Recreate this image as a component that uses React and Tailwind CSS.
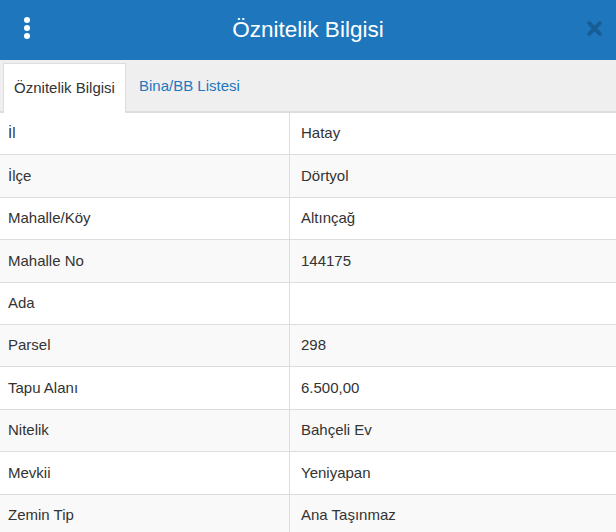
import React from 'react';

const rows = [
  ['İl', 'Hatay'],
  ['İlçe', 'Dörtyol'],
  ['Mahalle/Köy', 'Altınçağ'],
  ['Mahalle No', '144175'],
  ['Ada', ''],
  ['Parsel', '298'],
  ['Tapu Alanı', '6.500,00'],
  ['Nitelik', 'Bahçeli Ev'],
  ['Mevkii', 'Yeniyapan'],
  ['Zemin Tip', 'Ana Taşınmaz'],
];

const App = () => {
  return (
    <div className="w-[616px] h-[532px] overflow-hidden bg-white text-[#333] font-['Liberation_Sans',Arial,sans-serif]">
      {/* header */}
      <header className="relative h-[60px] bg-[#1e77bd] flex items-center justify-center">
        <div className="absolute left-[24px] top-[17px] flex flex-col gap-[2px]">
          <span className="w-[6px] h-[6px] rounded-full bg-white"></span>
          <span className="w-[6px] h-[6px] rounded-full bg-white"></span>
          <span className="w-[6px] h-[6px] rounded-full bg-white"></span>
        </div>
        <h1 className="text-white text-[22.5px] leading-none">Öznitelik Bilgisi</h1>
        <svg className="absolute right-[13px] top-[20px]" width="17" height="17" viewBox="0 0 16 16">
          <path d="M3 3 L13 13 M13 3 L3 13" stroke="#175d96" strokeWidth="3.8" strokeLinecap="round" />
        </svg>
      </header>

      {/* tabs */}
      <nav className="h-[53px] bg-[#efefef] border-b-2 border-[#dddddd] flex items-end pl-[3px] text-[15px]">
        <div className="h-[50px] w-[123px] bg-white border border-b-0 border-[#dddddd] flex items-center justify-center -mb-[2px]">
          Öznitelik Bilgisi
        </div>
        <div className="h-[50px] px-[13px] flex items-center text-[#1e77bd]">Bina/BB Listesi</div>
      </nav>

      {/* table */}
      <div className="text-[15px]">
        {rows.map(([key, value], index) => (
          <div
            key={index}
            className={`grid grid-cols-[290px_1fr] h-[42.4px] border-b border-[#dddddd] ${index % 2 === 1 ? 'bg-[#f9f9f9]' : 'bg-white'}`}
          >
            <div className="flex items-center pl-[8px] border-r border-[#dddddd]">{key}</div>
            <div className="flex items-center pl-[11px]">{value}</div>
          </div>
        ))}
      </div>
    </div>
  );
};

export default App;
